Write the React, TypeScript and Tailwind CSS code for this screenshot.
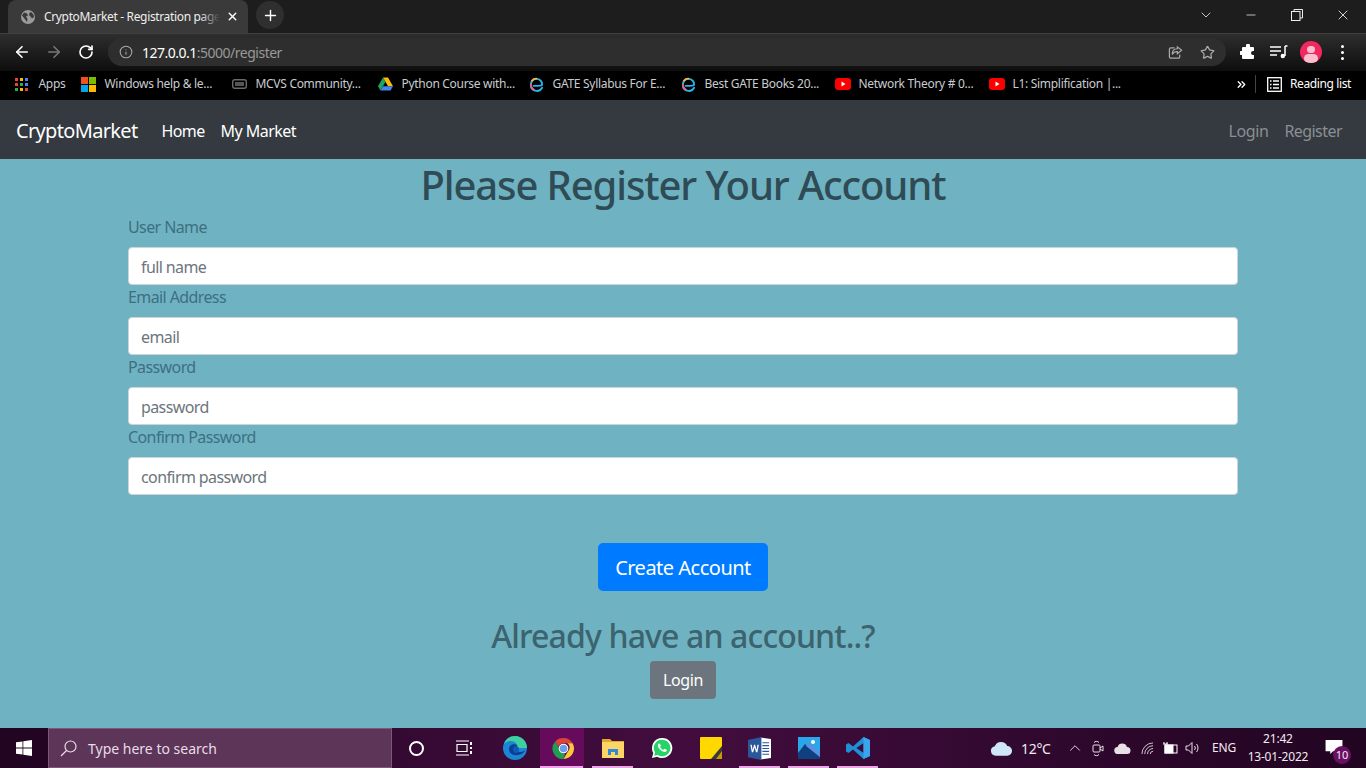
import { ArrowLeft, ArrowRight, RotateCw, Info, Star, Plus, X, Minus, ChevronDown, ChevronUp, ChevronsRight } from 'lucide-react';
import type { ReactNode } from 'react';

const ui = "font-['Noto_Sans',sans-serif]";

function ChromeLogo({ size = 16 }: { size?: number }) {
  return (
    <svg width={size} height={size} viewBox="0 0 24 24">
      <path d="M12 1a11 11 0 0 1 9.500 5.500H12a5.500 5.500 0 0 0-5.200 3.700L3.400 4.600A11 11 0 0 1 12 1z" fill="#db4437" />
      <path d="M21.500 6.500A11 11 0 0 1 12 23l4.800-8.200a5.500 5.500 0 0 0-.6-8.300z" fill="#fcc934" />
      <path d="M12 23A11 11 0 0 1 3.400 4.600l4.700 8.200a5.500 5.500 0 0 0 5.600 4.500z" fill="#1e9e50" />
      <circle cx="12" cy="12" r="5" fill="#fff" />
      <circle cx="12" cy="12" r="4" fill="#6d9eeb" />
    </svg>
  );
}

function EdgeBookmark() {
  return (
    <svg width="15" height="15" viewBox="0 0 16 16" fill="none">
      <path d="M14 11.500A6.400 6.400 0 0 1 2 8a6 6 0 0 1 12 0c0 1-1 1.400-4.500 1.400H5" stroke="#27b4e8" strokeWidth="2" strokeLinecap="round" />
      <path d="M3 4A6.200 6.200 0 0 1 8 1.800" stroke="#f5b13d" strokeWidth="2" strokeLinecap="round" />
      <path d="M2 8a6.200 6.200 0 0 0 3 5.400" stroke="#e85d8e" strokeWidth="2" strokeLinecap="round" />
    </svg>
  );
}

function YoutubeIcon() {
  return (
    <svg width="16" height="12" viewBox="0 0 16 12">
      <rect width="16" height="12" rx="3" fill="#f00" />
      <path d="M6.500 3.500v5l4-2.500z" fill="#fff" />
    </svg>
  );
}

function WinFlag({ size = 15 }: { size?: number }) {
  return (
    <svg width={size} height={size} viewBox="0 0 16 16">
      <rect width="7.500" height="7.500" fill="#f25022" />
      <rect x="8.500" width="7.500" height="7.500" fill="#7fba00" />
      <rect y="8.500" width="7.500" height="7.500" fill="#00a4ef" />
      <rect x="8.500" y="8.500" width="7.500" height="7.500" fill="#ffb900" />
    </svg>
  );
}

function AppsGrid() {
  const colors = ['#ea4335', '#fbbc04', '#4285f4', '#ea4335', '#34a853', '#4285f4', '#34a853', '#fbbc04', '#ea4335'];
  return (
    <div className="grid grid-cols-3 gap-[2px] w-[13px] h-[13px]">
      {colors.map((c, i) => (
        <span key={i} className="block w-[3px] h-[3px]" style={{ backgroundColor: c }} />
      ))}
    </div>
  );
}

const bookmarks: { w: number; icon: ReactNode; label: string }[] = [
  { w: 66, icon: <AppsGrid />, label: 'Apps' },
  { w: 151, icon: <WinFlag />, label: 'Windows help & le...' },
  { w: 146, icon: (
      <svg width="15" height="10" viewBox="0 0 15 10" fill="none">
        <rect x="0.700" y="0.700" width="13.600" height="8.600" rx="2" stroke="#6b6b6b" strokeWidth="1.400" />
        <rect x="3" y="3" width="9" height="4" fill="#555" />
      </svg>
    ), label: 'MCVS Community...' },
  { w: 151, icon: (
      <svg width="15" height="14" viewBox="0 0 16 14">
        <path d="M5.300 0h5.400l5.300 9.300h-5.300z" fill="#fbbc04" />
        <path d="M5.300 0L0 9.300 2.700 14l5.300-9.300z" fill="#1fa463" />
        <path d="M2.700 14h10.600L16 9.300H5.400z" fill="#4285f4" />
      </svg>
    ), label: 'Python Course with...' },
  { w: 152, icon: <EdgeBookmark />, label: 'GATE Syllabus For E...' },
  { w: 154, icon: <EdgeBookmark />, label: 'Best GATE Books 20...' },
  { w: 154, icon: <YoutubeIcon />, label: 'Network Theory # 0...' },
  { w: 140, icon: <YoutubeIcon />, label: 'L1: Simplification |...' },
];

function BrowserChrome() {
  return (
    <div className={`${ui} bg-black text-white`}>
      {/* tab strip */}
      <div className="h-[33px] bg-[#1d1d1d] flex items-end relative">
        <div className="ml-[8px] w-[240px] h-[33px] bg-[#3a3a3a] rounded-t-[8px] flex items-center pl-[12px] pr-[9px]">
          <svg width="16" height="16" viewBox="0 0 16 16" className="shrink-0">
            <circle cx="8" cy="8" r="7" fill="#9b9b9b" />
            <path d="M4 3.500l3 1 1 2-2 1 1.500 2.500-.5 3L4 9 2 6.500zM11 3l2.500 2.500L14 8l-2 1.500-1.500-2L9 6l.5-2z" fill="#3a3a3a" />
          </svg>
          <div className="relative ml-[8px] w-[176px] overflow-hidden">
            <span className="block text-[12px] text-[#eee] whitespace-nowrap tracking-[-0.35px]">CryptoMarket - Registration page</span>
            <span className="absolute right-0 top-0 bottom-0 w-[20px] bg-gradient-to-r from-transparent to-[#3a3a3a]" />
          </div>
          <X size={13} strokeWidth={2.500} className="ml-auto text-white shrink-0" />
        </div>
        <div className="ml-[8px] mb-[4px] w-[28px] h-[28px] rounded-full bg-[#2f2f2f] flex items-center justify-center">
          <Plus size={17} strokeWidth={2} />
        </div>
        <div className="ml-auto flex items-center h-full pb-[4px] text-[#eee]">
          <ChevronDown size={16} strokeWidth={1.200} className="mr-[30px]" />
          <Minus size={14} strokeWidth={1.300} className="mr-[33px]" />
          <svg width="12" height="12" viewBox="0 0 12 12" fill="none" stroke="#eee" className="mr-[32px]">
            <rect x="0.500" y="2.500" width="8.500" height="9" />
            <path d="M3 2.500V.5h8.500v8.500H9" />
          </svg>
          <X size={16} strokeWidth={1.300} className="mr-[15px]" />
        </div>
      </div>
      {/* address bar */}
      <div className="h-[38px] pb-[1px] bg-gradient-to-b from-[#2e2e2e] to-[#0e0e0e] flex items-center border-t border-[#3f3f3f]">
        <ArrowLeft size={18} strokeWidth={2.200} className="ml-[13px]" />
        <ArrowRight size={18} strokeWidth={2.200} className="ml-[14px] text-[#777]" />
        <RotateCw size={16} strokeWidth={2.500} className="ml-[15px]" />
        <div className="ml-[14px] w-[1118px] h-[28px] rounded-full bg-[#2e2e2e] flex items-center pl-[11px]">
          <Info size={14} strokeWidth={1.800} className="text-[#aaa]" />
          <span className="ml-[9px] text-[14px] tracking-[-0.5px] text-white">127.0.0.1<span className="text-[#999]">:5000/register</span></span>
          <svg width="15" height="15" viewBox="0 0 16 16" fill="none" stroke="#aaa" strokeWidth="1.300" className="ml-auto">
            <path d="M7 3H3a1.500 1.500 0 0 0-1.500 1.500v8A1.500 1.500 0 0 0 3 14h8a1.500 1.500 0 0 0 1.500-1.500V10" />
            <path d="M10 2l4.500 3.700L10 9.300V7c-3 0-4.500 1-5.500 3 0-3.500 2-6 5.500-6z" />
          </svg>
          <Star size={15} strokeWidth={2} className="ml-[17px] mr-[11px] text-[#aaa]" />
        </div>
        <svg width="16" height="16" viewBox="0 0 16 16" fill="#fff" className="ml-[14px]">
          <path d="M6 1.500a2 2 0 0 1 4 0V3h3a1 1 0 0 1 1 1v3h-1a2 2 0 0 0 0 4h1v3a1 1 0 0 1-1 1H3a1 1 0 0 1-1-1v-3H1a2 2 0 0 1 0-4h1V4a1 1 0 0 1 1-1h3z" />
        </svg>
        <svg width="18" height="14" viewBox="0 0 18 14" fill="none" stroke="#fff" strokeWidth="1.300" className="ml-[14px]">
          <path d="M0 2h11M0 6h11M0 10h7" />
          <path d="M15 1h2.500M15 1v10" strokeWidth="1.500" />
          <circle cx="12.800" cy="11" r="2.200" fill="#fff" stroke="none" />
        </svg>
        <div className="ml-[12px] w-[22px] h-[22px] rounded-full bg-[#f2295f] overflow-hidden flex flex-col items-center">
          <span className="mt-[5px] w-[8px] h-[8px] rounded-full bg-[#fbc0d0]" />
          <span className="mt-[1px] w-[14px] h-[10px] rounded-full bg-[#fbc0d0]" />
        </div>
        <div className="ml-[19px] flex flex-col gap-[3px]">
          <span className="w-[3px] h-[3px] rounded-full bg-white" />
          <span className="w-[3px] h-[3px] rounded-full bg-white" />
          <span className="w-[3px] h-[3px] rounded-full bg-white" />
        </div>
      </div>
      {/* bookmarks */}
      <div className="h-[29px] bg-black flex items-center pl-[15px] pb-[3px]">
        {bookmarks.map((b) => (
          <div key={b.label} className="flex items-center shrink-0" style={{ width: b.w }}>
            <span className="w-[23.500px] shrink-0 flex items-center">{b.icon}</span>
            <span className="text-[12px] tracking-[-0.3px] text-[#c8ccd0] whitespace-nowrap">{b.label}</span>
          </div>
        ))}
        <ChevronsRight size={13} strokeWidth={2.500} className="ml-[106px]" />
        <span className="ml-[7px] w-px h-[18px] bg-[#444]" />
        <svg width="15" height="15" viewBox="0 0 15 15" fill="none" stroke="#fff" className="ml-[11px]">
          <rect x="0.700" y="0.700" width="13.600" height="13.600" strokeWidth="1.300" />
          <path d="M3 4h1.500M6 4h6M3 7.500h1.500M6 7.500h6M3 11h1.500M6 11h6" strokeWidth="1.300" />
        </svg>
        <span className="ml-[8px] text-[12px] tracking-[-0.38px] text-white whitespace-nowrap">Reading list</span>
      </div>
    </div>
  );
}

function Navbar() {
  return (
    <nav className={`${ui} h-[59px] bg-[#343a40] flex items-center pt-[2px] px-[16px]`}>
      <span className="text-[20px] text-white tracking-[-0.67px]">CryptoMarket</span>
      <span className="ml-[24px] text-[16px] text-white tracking-[-0.6px]">Home</span>
      <span className="ml-[16px] text-[16px] text-white tracking-[-0.55px]">My Market</span>
      <span className="ml-auto text-[16px] text-[#8b8f92] tracking-[-0.4px]">Login</span>
      <span className="ml-[16px] mr-[8px] text-[16px] text-[#8b8f92] tracking-[-0.55px]">Register</span>
    </nav>
  );
}

const fields = [
  { label: 'User Name', placeholder: 'full name' },
  { label: 'Email Address', placeholder: 'email' },
  { label: 'Password', placeholder: 'password' },
  { label: 'Confirm Password', placeholder: 'confirm password' },
];

function RegisterForm() {
  return (
    <main className={`${ui} h-[569px] bg-[#6fb3c3] flex flex-col`}>
      <div className="w-[1110px] mx-auto flex flex-col">
        <h1 className="h-[48px] mb-[8px] text-[40px] leading-[52px] font-medium text-[#2f4b55] text-center tracking-[-1.120px]">Please Register Your Account</h1>
        {fields.map((f) => (
          <div key={f.label} className="flex flex-col">
            <label className="h-[24px] mb-[8px] text-[16px] leading-[24px] text-[#3e6f80] tracking-[-0.6px]">{f.label}</label>
            <input
              placeholder={f.placeholder}
              className="h-[38px] rounded-[4px] bg-white border border-[#ced4da] pt-[2px] px-[12px] text-[16px] tracking-[-0.6px] placeholder:text-[#6c757d]"
            />
          </div>
        ))}
        <button className="self-center mt-[48px] pt-[2px] w-[170px] h-[48px] rounded-[5px] bg-[#007bff] text-white text-[20px] tracking-[-0.5px]">Create Account</button>
        <h2 className="mt-[25px] h-[40px] text-[32px] leading-[40px] font-medium text-[#3d636e] text-center tracking-[-0.870px]">Already have an account..?</h2>
        <button className="self-center mt-[5px] w-[66px] h-[38px] rounded-[4px] bg-[#6c757d] text-white text-[16px] tracking-[-0.4px]">Login</button>
      </div>
    </main>
  );
}

function Slot({ w = 49, active, under, children }: { w?: number; active?: boolean; under?: boolean; children: ReactNode }) {
  return (
    <div className="relative h-full flex items-center justify-center shrink-0" style={{ width: w }}>
      {active && <span className="absolute left-[1px] right-[4px] top-0 bottom-0 bg-[#660a5c]" />}
      <span className="relative flex">{children}</span>
      {under && <span className={`absolute bottom-0 h-[2px] bg-[#eca6e6] ${active ? 'left-[1px] right-[5px]' : 'left-[4px] right-[4px]'}`} />}
    </div>
  );
}

function Taskbar() {
  return (
    <div className={`${ui} h-[40px] bg-gradient-to-r from-[#210521] via-[#420d3e] to-[#210521] flex items-center text-white`}>
      <div className="w-[48px] h-full flex items-center justify-center">
        <svg width="16" height="16" viewBox="0 0 16 16" fill="#fff">
          <path d="M0 2.300l6.500-.9v6.200H0zM7.300 1.300L16 0v7.600H7.300zM0 8.400h6.500v6.200L0 13.700zM7.300 8.400H16V16l-8.700-1.200z" />
        </svg>
      </div>
      <div className="w-[344px] h-full bg-[#5c3558] border border-[#7b5877] flex items-center pl-[11px]">
        <svg width="17" height="17" viewBox="0 0 17 17" fill="none" stroke="#e8dce6" strokeWidth="1.200">
          <circle cx="10.500" cy="6.500" r="5.500" />
          <path d="M6.500 10.500L1 16" />
        </svg>
        <span className="ml-[11px] text-[14px] text-[#e8dce6]">Type here to search</span>
      </div>
      <Slot w={48}>
        <span className="w-[15px] h-[15px] rounded-full border-2 border-white" />
      </Slot>
      <Slot w={48}>
        <svg width="18" height="16" viewBox="0 0 18 16" fill="none" stroke="#fff" strokeWidth="1.200">
          <path d="M1 1h13M1 15h13M2 4.500h10v7H2z" />
          <path d="M16 2v3M16 7v2M16 11v3" strokeWidth="2" />
        </svg>
      </Slot>
      <div className="w-[2px] shrink-0" />
      <Slot>
        <svg width="24" height="24" viewBox="0 0 24 24">
          <circle cx="12" cy="12" r="12" fill="#1b86d4" />
          <path d="M24 12c0-6.600-5.400-12-12-12C7 0 2.500 3 1 8c3-3.500 10-4.500 13 .5 1 2-.5 3.500-2 3.500h10z" fill="#3fd0a0" />
          <path d="M14 9c-3-2-8-.5-8 4 0 4 4 7 9 6 3-.5 6-2 7.500-5-5 3.500-9 2-9-1 0-1.500.5-3 .5-4z" fill="#0c3f8f" />
          <ellipse cx="13" cy="13.500" rx="3" ry="3.500" fill="#0f5bb5" />
        </svg>
      </Slot>
      <Slot active under>
        <ChromeLogo size={23} />
      </Slot>
      <Slot under>
        <svg width="22" height="20" viewBox="0 0 22 20">
          <path d="M0 1h8l2 2h12v4H0z" fill="#e0a82e" />
          <path d="M0 4h22v16H0z" fill="#fdd566" />
          <path d="M6 17v-6h10v6h-3v-3H9v3z" fill="#2f88d8" />
        </svg>
      </Slot>
      <Slot>
        <svg width="22" height="22" viewBox="0 0 24 24">
          <path d="M12 1a11 11 0 0 0-9.500 16.500L1 23l5.700-1.500A11 11 0 1 0 12 1z" fill="#fff" />
          <path d="M12 3a9 9 0 0 0-7.600 13.800L3.500 20.500l3.700-1A9 9 0 1 0 12 3z" fill="#25d366" />
          <path d="M8.700 7c-.4 0-1.200.5-1.200 2 0 2 1.300 4 3.300 5.500 1.800 1.400 3.800 2.200 5.100 1.700.9-.3 1.500-1.100 1.500-1.900 0-.3-2.200-1.400-2.500-1.400s-.9 1-1.200 1.100c-.8 0-3.300-2-3.700-3.200 0-.4.800-.9.800-1.300 0-.3-1-2.500-1.900-2.500z" fill="#fff" />
        </svg>
      </Slot>
      <Slot>
        <svg width="22" height="22" viewBox="0 0 22 22">
          <rect width="22" height="22" fill="#ffd800" rx="1" />
          <path d="M22 9v13H11z" fill="#3a3a3a" />
          <path d="M22 14v8H16z" fill="#c39a00" />
        </svg>
      </Slot>
      <Slot under>
        <svg width="23" height="23" viewBox="0 0 24 24">
          <path d="M13 0.500 24 2v20l-11 1.500z" fill="#fff" />
          <path d="M15 6h7M15 9h7M15 12h7M15 15h7M15 18h7" stroke="#2b579a" strokeWidth="1.300" />
          <path d="M14 0v24L0 21V3z" fill="#2b579a" />
          <path d="M2.500 8l1.500 8h1.400l1.500-5 1.500 5h1.400l1.500-8h-1.400l-.9 5.500L7.400 8H6.300l-1.500 5.500L3.900 8z" fill="#fff" />
        </svg>
      </Slot>
      <Slot under>
        <svg width="22" height="22" viewBox="0 0 22 22">
          <rect width="22" height="22" fill="#28a8ea" />
          <path d="M0 16l7-9 15 13v2H0z" fill="#0f3f7f" />
          <path d="M8 9l3-4 11 10v5z" fill="#5b8fe0" />
          <circle cx="15" cy="5" r="2" fill="#fff" />
        </svg>
      </Slot>
      <Slot under>
        <svg width="24" height="24" viewBox="0 0 24 24">
          <path d="M17.500 1 24 4v16l-6.500 3L7 13.500l-4.500 3.500L0 15.500v-7L2.500 7 7 10.500z" fill="#1f8fd8" />
          <path d="M17.500 7v10L10.500 12z" fill="#3a0b37" />
          <path d="M17.500 1 24 4v16l-6.500 3z" fill="#3aa5ec" />
        </svg>
      </Slot>
      {/* tray */}
      <div className="ml-[108px] flex items-center h-full text-[#f2eaf1] shrink-0">
        <svg width="23" height="16" viewBox="0 0 24 16" fill="#cfe6f7">
          <path d="M6 16a5 5 0 0 1-1-9.900A7 7 0 0 1 18 6a5 5 0 0 1 0 10z" />
        </svg>
        <span className="ml-[8px] w-[41px] text-[14px] tracking-[-0.3px]">12°C</span>
        <ChevronUp size={18} strokeWidth={1.200} className="ml-[4px]" />
        <svg width="12" height="17" viewBox="0 0 12 17" fill="none" stroke="#e8e0e6" strokeWidth="1" className="ml-[8px]">
          <rect x="1" y="5" width="7" height="7" rx="1" />
          <path d="M8 8l3-2v5l-3-2M2 2.500C3 1 6 1 7 2.500M2 14.500c1 1.500 4 1.500 5 0" />
        </svg>
        <svg width="17" height="11" viewBox="0 0 17 11" fill="#e8e0e6" className="ml-[10px]">
          <path d="M4 11a3.500 3.500 0 0 1-.5-7A5 5 0 0 1 13 4a3.500 3.500 0 0 1 0 7z" />
        </svg>
        <svg width="13" height="13" viewBox="0 0 14 14" fill="none" stroke="#d8d0d6" className="ml-[10px]">
          <path d="M1 13A12 12 0 0 1 13 1M4 13a9 9 0 0 1 9-9M7 13a6 6 0 0 1 6-6M10 13a3 3 0 0 1 3-3" />
        </svg>
        <svg width="16" height="12" viewBox="0 0 16 12" fill="none" stroke="#fff" className="ml-[8px]">
          <rect x="3" y="3" width="12" height="8" />
          <rect x="3" y="3" width="8" height="8" fill="#fff" />
          <path d="M1 2h5M2 0v2M5 0v2" />
        </svg>
        <svg width="16" height="14" viewBox="0 0 16 14" fill="none" stroke="#e8e0e6" className="ml-[7px]">
          <path d="M1 5h2.500L7 1.500v11L3.500 9H1zM9.500 5a3 3 0 0 1 0 4M11.500 3a6 6 0 0 1 0 8" />
        </svg>
        <span className="ml-[11px] text-[12px] tracking-[-0.2px]">ENG</span>
        <div className="ml-[13px] flex flex-col items-center text-[12px] leading-[18px] tracking-[-0.2px] w-[58px]">
          <span>21:42</span>
          <span className="whitespace-nowrap">13-01-2022</span>
        </div>
        <div className="relative ml-[18px] w-[26px] h-[24px] pt-[4px]">
          <svg width="18" height="15" viewBox="0 0 18 16" fill="#fff">
            <path d="M0 0h18v12H8l-3 3v-3H0z" />
          </svg>
          <span className="absolute right-0 bottom-[-4px] w-[18px] h-[18px] rounded-full bg-[#6a0f63] text-[11px] leading-[18px] text-center">10</span>
        </div>
      </div>
    </div>
  );
}

export default function App() {
  return (
    <div className="w-[1366px] h-[768px] overflow-hidden flex flex-col">
      <BrowserChrome />
      <Navbar />
      <RegisterForm />
      <Taskbar />
    </div>
  );
}
